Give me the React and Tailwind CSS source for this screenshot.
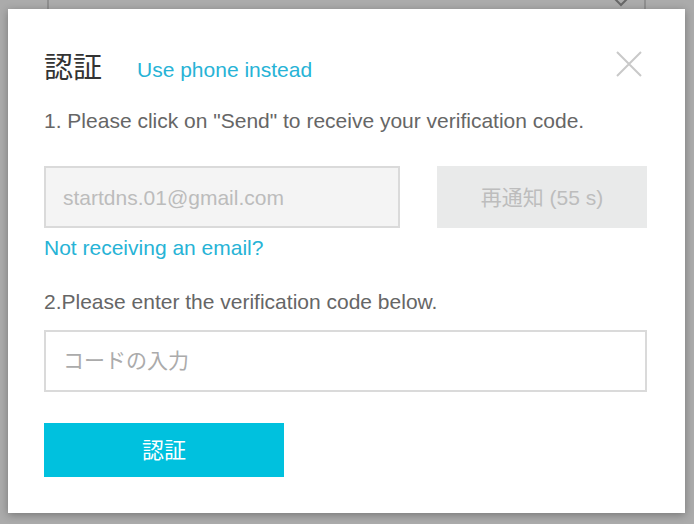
import React from 'react'

const font = { fontFamily: '"Liberation Sans", Arial, "Noto Sans CJK JP", sans-serif' }

export default function App() {
  return (
    <div className="w-[694px] h-[524px] bg-[#ababab] overflow-hidden" style={font}>
      {/* page behind the overlay */}
      <div className="h-[9px] overflow-hidden pl-[47px] pr-[48px]">
        <div className="-mt-[26px] h-[50px] border-x-2 border-[#8f8f8f] flex items-start justify-between pl-[28px] pr-[14px]">
          <span className="text-[22px] leading-[30px] text-[#444]">日本</span>
          <svg width="18" height="12" viewBox="0 0 18 12" className="mt-[22px]">
            <path d="M2 2 L9 9 L16 2" fill="none" stroke="#666" strokeWidth="2" />
          </svg>
        </div>
      </div>

      <div className="ml-[8px] w-[677px] h-[504px] bg-white shadow-[0_2px_8px_rgba(0,0,0,0.3)] pl-[36px] pr-[38px] pt-[39px] pb-[36px]">
        <div className="flex items-center justify-between h-[40px]">
          <div className="flex items-center">
            <span className="text-[29px] leading-[40px] text-[#333]">認証</span>
            <span className="ml-[35px] text-[21px] leading-[40px] text-[#27b3d6] mt-[4px]">Use phone instead</span>
          </div>
          <svg width="26" height="26" viewBox="0 0 26 26" className="mr-[5px] -mt-[9px]">
            <path d="M1 1 L25 25 M25 1 L1 25" stroke="#c9c9c9" strokeWidth="2" fill="none" />
          </svg>
        </div>

        <p className="mt-[18px] text-[21px] leading-[30px] text-[#666]">
          1. Please click on "Send" to receive your verification code.
        </p>

        <div className="mt-[30px] flex justify-between">
          <div className="w-[356px] h-[62px] border-2 border-[#dadada] bg-[#f4f4f4] flex items-center pl-[17px] pt-[2px] text-[21px] text-[#bcbcbc]">
            startdns.01@gmail.com
          </div>
          <button className="w-[210px] h-[62px] bg-[#e9eaea] text-[21px] text-[#bdbdbd] flex items-center justify-center pt-[2px]">
            再通知 (55 s)
          </button>
        </div>

        <p className="mt-[5px] text-[21px] leading-[30px] text-[#27b3d6]">Not receiving an email?</p>

        <p className="mt-[24px] text-[21px] leading-[30px] text-[#666]">
          2.Please enter the verification code below.
        </p>

        <div className="mt-[13px] h-[62px] border-2 border-[#dadada] bg-white flex items-center pl-[17px] text-[21px] text-[#ababab]">
          コードの入力
        </div>

        <button className="mt-[31px] w-[240px] h-[54px] bg-[#00c1de] text-white text-[22px] flex items-center justify-center">
          認証
        </button>
      </div>
    </div>
  )
}
